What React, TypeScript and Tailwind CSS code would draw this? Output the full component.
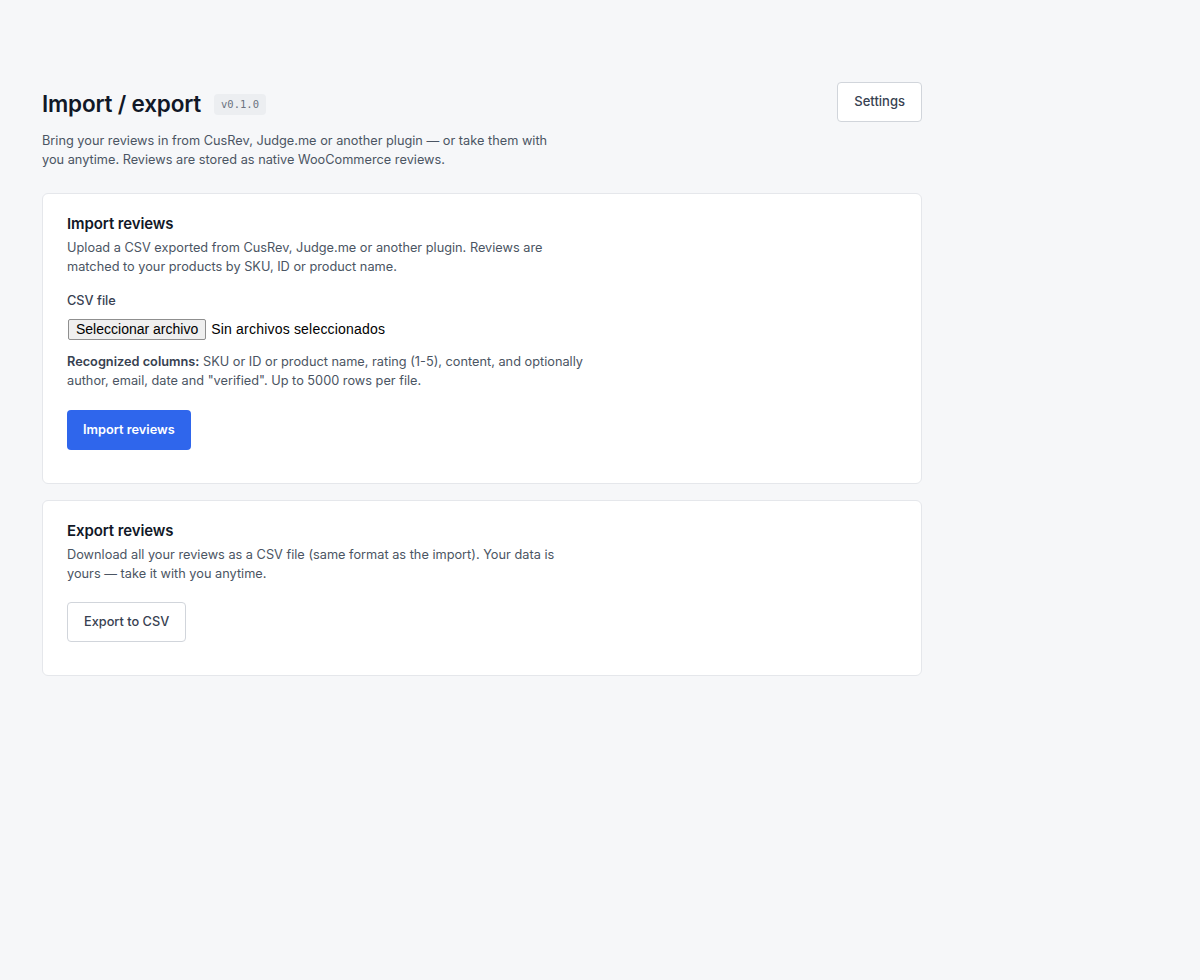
import React from "react";

const Card = ({ title, desc, children }: { title: string; desc: string; children: React.ReactNode }) => (
  <section className="rounded-[6px] border border-[#e5e7eb] bg-white px-6 pt-[18px] pb-[33px]">
    <h2 className="text-[15px] leading-[24px] font-semibold tracking-[-0.1px] text-[#111827]">{title}</h2>
    <p className="mt-[2px] max-w-[520px] text-[12.75px] leading-[19px] text-[#4b5563]">{desc}</p>
    {children}
  </section>
);

const App = () => {
  return (
    <div className="min-h-screen bg-[#f6f7f9] font-['Inter',sans-serif] text-[#111827]">
      <div className="w-[880px] ml-[42px] pt-[82px]">
        <header className="flex items-start justify-between">
          <div className="pt-[8px]">
            <div className="flex items-center gap-[13px]">
              <h1 className="text-[22.5px] leading-[28px] font-semibold tracking-[-0.2px] text-[#111827]">
                Import / export
              </h1>
              <span className="rounded-[4px] bg-[#eceef1] px-[7px] py-[3px] font-['DejaVu_Sans_Mono',monospace] text-[10.5px] leading-[15px] text-[#6b7280]">
                v0.1.0
              </span>
            </div>
            <p className="mt-[13px] max-w-[520px] text-[12.75px] leading-[19px] text-[#4b5563]">
              Bring your reviews in from CusRev, Judge.me or another plugin — or take them with you anytime.
              Reviews are stored as native WooCommerce reviews.
            </p>
          </div>
          <button className="h-[40px] rounded-[4px] border border-[#d1d5db] bg-white px-4 text-[13px] font-medium text-[#374151]">
            Settings
          </button>
        </header>

        <div className="mt-[24px] flex flex-col gap-4">
          <Card
            title="Import reviews"
            desc="Upload a CSV exported from CusRev, Judge.me or another plugin. Reviews are matched to your products by SKU, ID or product name."
          >
            <label className="mt-[15px] block text-[12.75px] leading-[20px] font-medium text-[#374151]">CSV file</label>
            <div className="mt-[8px] flex items-center gap-[5px] font-['Liberation_Sans',Arial,sans-serif] text-[14px] text-black">
              <span className="ml-[1px] h-[21px] rounded-[2px] border border-[#8f8f8f] bg-[#efefef] px-[7px] leading-[19px]">
                Seleccionar archivo
              </span>
              <span className="leading-[21px] tracking-[0.2px]">Sin archivos seleccionados</span>
            </div>
            <p className="mt-[12px] max-w-[520px] text-[12.75px] leading-[19px] text-[#4b5563]">
              <strong className="font-semibold text-[#374151]">Recognized columns:</strong> SKU or ID or product name,
              rating (1-5), content, and optionally author, email, date and "verified". Up to 5000 rows per file.
            </p>
            <button className="mt-[20px] h-[40px] rounded-[4px] bg-[#2f66ec] px-4 text-[12.75px] font-semibold text-white">
              Import reviews
            </button>
          </Card>

          <Card
            title="Export reviews"
            desc="Download all your reviews as a CSV file (same format as the import). Your data is yours — take it with you anytime."
          >
            <button className="mt-[19px] h-[40px] rounded-[4px] border border-[#d1d5db] bg-white px-4 text-[12.75px] font-medium text-[#374151]">
              Export to CSV
            </button>
          </Card>
        </div>
      </div>
    </div>
  );
};

export default App;
